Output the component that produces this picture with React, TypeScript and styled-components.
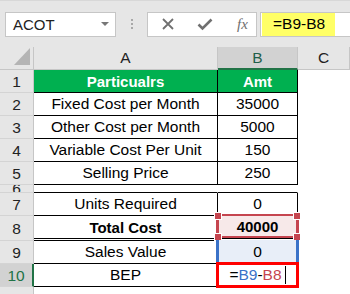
import React from 'react';
import styled, { createGlobalStyle } from 'styled-components';

const Global = createGlobalStyle`
    body {
        margin: 0;
        background: #ffffff;
    }
`;

const Sheet = styled.div`
    width: 350px;
    height: 294px;
    overflow: hidden;
    background: #ffffff;
    font-family: "Liberation Sans", Arial, sans-serif;
    color: #000;
`;

const Ribbon = styled.div`
    height: 47px;
    box-sizing: border-box;
    background: #e6e6e6;
    border-top: 1px solid #d8d8d8;
    display: flex;
    align-items: center;
    padding-left: 5px;
`;

const NameBox = styled.div`
    width: 111px;
    height: 25px;
    box-sizing: border-box;
    background: #fff;
    border: 1px solid #c6c6c6;
    display: flex;
    align-items: center;
    justify-content: space-between;
    padding: 0 6px 0 7px;
    font-size: 15px;
    color: #222;
`;

const DropArrow = styled.div`
    width: 0;
    height: 0;
    border-left: 4px solid transparent;
    border-right: 4px solid transparent;
    border-top: 4px solid #777;
`;

const Dots = styled.div`
    width: 2px;
    margin: 0 14px 0 15px;
    display: flex;
    flex-direction: column;
    gap: 2px;
`;

const Dot = styled.span`
    width: 2px;
    height: 2px;
    background: #a8a8a8;
`;

const FxBox = styled.div`
    width: 110px;
    height: 25px;
    box-sizing: border-box;
    background: #fff;
    border: 1px solid #c6c6c6;
    display: flex;
    align-items: center;
    padding-left: 13px;
    gap: 22px;
`;

const Fx = styled.span`
    font-family: "Liberation Serif", "Times New Roman", serif;
    font-style: italic;
    font-size: 15px;
    color: #6f6f6f;
    margin-left: 2px;
`;

const FormulaInput = styled.div`
    flex: 1;
    height: 25px;
    margin-left: 3px;
    box-sizing: border-box;
    background: #fff;
    border: 1px solid #c6c6c6;
    border-right: none;
    display: flex;
    padding: 0 0 0 1px;
`;

const Highlight = styled.div`
    width: 73px;
    background: #ffff66;
    font-size: 15.5px;
    display: flex;
    align-items: center;
    padding-left: 11px;
    box-sizing: border-box;
`;

const Row = styled.div<{ $h: number }>`
    display: flex;
    height: ${p => p.$h}px;
`;

const Corner = styled.div`
    width: 34px;
    box-sizing: border-box;
    background: #e6e6e6;
    border-right: 1px solid #c6c6c6;
    border-bottom: 1px solid #c6c6c6;
    display: flex;
    align-items: flex-end;
    justify-content: flex-end;
    padding: 0 3px 4px 0;
`;

const CornerTriangle = styled.div`
    width: 0;
    height: 0;
    border-left: 16px solid transparent;
    border-bottom: 17px solid #b4b4b4;
`;

const ColHead = styled.div<{ $w?: number; $active?: boolean }>`
    ${p => (p.$w ? `width: ${p.$w}px;` : 'flex: 1;')}
    box-sizing: border-box;
    background: ${p => (p.$active ? '#d2d2d2' : '#e6e6e6')};
    border-right: 1px solid #c6c6c6;
    border-bottom: ${p => (p.$active ? '2px solid #217346' : '1px solid #c6c6c6')};
    display: flex;
    align-items: center;
    justify-content: center;
    font-size: 15.5px;
    color: ${p => (p.$active ? '#1f5f4a' : '#222')};
    padding-top: ${p => (p.$active ? '1px' : '0')};
`;

const RowHead = styled.div<{ $active?: boolean }>`
    width: 34px;
    box-sizing: border-box;
    background: ${p => (p.$active ? '#d2d2d2' : '#e6e6e6')};
    border-right: ${p => (p.$active ? '2px solid #217346' : '1px solid #c6c6c6')};
    border-bottom: 1px solid #d4d4d4;
    display: flex;
    align-items: center;
    justify-content: center;
    font-size: 15.5px;
    color: ${p => (p.$active ? '#217346' : '#222')};
    overflow: hidden;
    line-height: 15px;
`;

const Cell = styled.div<{ $w: number; $green?: boolean; $bold?: boolean; $line?: string; $side?: boolean }>`
    width: ${p => p.$w}px;
    box-sizing: border-box;
    position: relative;
    background: ${p => (p.$green ? '#00b050' : '#fff')};
    color: ${p => (p.$green ? '#fff' : '#000')};
    font-weight: ${p => (p.$bold || p.$green ? 'bold' : 'normal')};
    border-right: ${p => (p.$side === false ? '1px solid transparent' : '1px solid #000')};
    border-bottom: ${p => p.$line || '1px solid #000'};
    display: flex;
    align-items: center;
    justify-content: center;
    font-size: ${p => (p.$green || p.$bold ? '15px' : '15.5px')};
`;

const Blank = styled.div`
    flex: 1;
`;

const Select = styled.div<{ $tone: 'pink' | 'blue' | 'red' }>`
    position: absolute;
    left: -2px;
    right: -2px;
    top: ${p => (p.$tone === 'blue' ? '-1px' : '-2px')};
    bottom: ${p => (p.$tone === 'pink' ? '0px' : p.$tone === 'blue' ? '-1px' : '-2px')};
    box-sizing: border-box;
    display: flex;
    align-items: center;
    justify-content: center;
    ${p =>
        p.$tone === 'pink'
            ? 'background: #f7e9e9; border: 2px solid #c5454f; border-left-width: 3px; border-right-width: 3px;'
            : p.$tone === 'blue'
            ? 'background: #e8eef8; border-left: 3px solid #3a72c8; border-right: 3px solid #3a72c8;'
            : 'background: #fff; border: 3px solid #ff0000;'}
`;

const Handle = styled.span<{ $x: 'l' | 'r'; $y: 't' | 'b' }>`
    position: absolute;
    width: 6px;
    height: 6px;
    background: #c5454f;
    border: 1px solid #fff;
    ${p => (p.$x === 'l' ? 'left: -5px;' : 'right: -5px;')}
    ${p => (p.$y === 't' ? 'top: -4px;' : 'bottom: -5px;')}
`;

const Ref = styled.span<{ $c: string }>`
    color: ${p => p.$c};
`;

const Caret = styled.span`
    display: inline-block;
    width: 1px;
    height: 18px;
    background: #000;
    margin-left: 3px;
    vertical-align: middle;
`;

const CloseIcon = () => (
    <svg width="14" height="14" viewBox="0 0 14 14">
        <path d="M2 2 L12 12 M12 2 L2 12" stroke="#707070" strokeWidth="1.8" fill="none" />
    </svg>
);

const CheckIcon = () => (
    <svg width="16" height="14" viewBox="0 0 16 14">
        <path d="M1.5 7.5 L5.5 11.5 L14.5 2.5" stroke="#707070" strokeWidth="2.6" fill="none" />
    </svg>
);

type Line = {
    n: string;
    h: number;
    a?: string;
    b?: string;
    green?: boolean;
    bold?: boolean;
    line?: string;
    side?: boolean;
    tone?: 'pink' | 'blue' | 'red';
    active?: boolean;
};

const lines: Line[] = [
    { n: '1', h: 23, a: 'Particualrs', b: 'Amt', green: true },
    { n: '2', h: 23, a: 'Fixed Cost per Month', b: '35000' },
    { n: '3', h: 23, a: 'Other Cost per Month', b: '5000' },
    { n: '4', h: 23, a: 'Variable Cost Per Unit', b: '150' },
    { n: '5', h: 23, a: 'Selling Price', b: '250' },
    { n: '6', h: 8, side: false },
    { n: '7', h: 23, a: 'Units Required', b: '0' },
    { n: '8', h: 25, a: 'Total Cost', b: '40000', bold: true, line: '3px double #000', tone: 'pink' },
    { n: '9', h: 23, a: 'Sales Value', b: '0', tone: 'blue' },
    { n: '10', h: 23, a: 'BEP', tone: 'red', active: true },
    { n: '11', h: 23 },
];

const App = () => {
    return (
        <Sheet>
            <Global />
            <Ribbon>
                <NameBox>
                    ACOT
                    <DropArrow />
                </NameBox>
                <Dots>
                    <Dot />
                    <Dot />
                    <Dot />
                </Dots>
                <FxBox>
                    <CloseIcon />
                    <CheckIcon />
                    <Fx>fx</Fx>
                </FxBox>
                <FormulaInput>
                    <Highlight>=B9-B8</Highlight>
                </FormulaInput>
            </Ribbon>
            <Row $h={23}>
                <Corner>
                    <CornerTriangle />
                </Corner>
                <ColHead $w={184}>A</ColHead>
                <ColHead $w={80} $active>B</ColHead>
                <ColHead>C</ColHead>
            </Row>
            {lines.map(l => (
                <Row $h={l.h} key={l.n}>
                    <RowHead $active={l.active}>{l.n}</RowHead>
                    {l.n === '11' ? (
                        <Blank />
                    ) : (
                        <>
                            <Cell $w={184} $green={l.green} $bold={l.bold} $line={l.line} $side={l.side}>
                                {l.a}
                            </Cell>
                            <Cell $w={80} $green={l.green} $bold={l.bold} $line={l.line} $side={l.side}>
                                {l.tone ? (
                                    <Select $tone={l.tone}>
                                        {l.tone === 'red' ? (
                                            <span>
                                                =<Ref $c="#3a72c8">B9</Ref>-<Ref $c="#c5454f">B8</Ref>
                                                <Caret />
                                            </span>
                                        ) : (
                                            l.b
                                        )}
                                        {l.tone === 'pink' && (
                                            <>
                                                <Handle $x="l" $y="t" />
                                                <Handle $x="r" $y="t" />
                                                <Handle $x="l" $y="b" />
                                                <Handle $x="r" $y="b" />
                                            </>
                                        )}
                                    </Select>
                                ) : (
                                    l.b
                                )}
                            </Cell>
                            <Blank />
                        </>
                    )}
                </Row>
            ))}
        </Sheet>
    );
};

export default App;
